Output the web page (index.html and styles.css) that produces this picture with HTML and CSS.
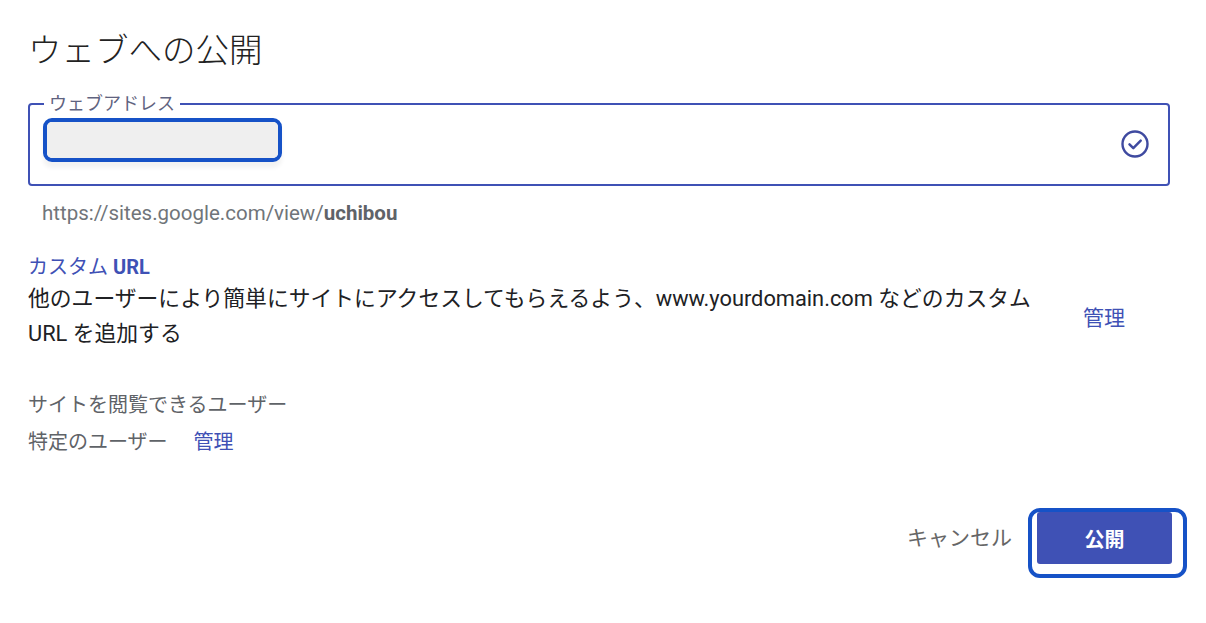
FILE: index.html
```html
<html>
    <head>
        <meta charset="utf-8">
        <link rel="stylesheet" href="styles.css">
    </head>
    <body>
        <div class="dialog">
            <h1 class="title">ウェブへの公開</h1>

            <fieldset class="addr">
                <legend class="addr-label">ウェブアドレス</legend>
                <div class="addr-row">
                    <div class="mark"><div class="blur"></div></div>
                    <svg class="ok" width="30" height="30" viewBox="0 0 30 30">
                        <circle cx="15" cy="15" r="12.5" fill="none" stroke="#3f4aa0" stroke-width="2.4"/>
                        <path d="M9.5 15.3l3.8 3.8 7.4-7.4" fill="none" stroke="#3f4aa0" stroke-width="2.5" stroke-linecap="round" stroke-linejoin="round"/>
                    </svg>
                </div>
            </fieldset>
            <div class="hint">https://sites.google.com/view/<b>uchibou</b></div>

            <div class="sect-title">カスタム <b>URL</b></div>
            <div class="custom">
                <p class="desc">他のユーザーにより簡単にサイトにアクセスしてもらえるよう、www.yourdomain.com などのカスタム URL を追加する</p>
                <a class="link manage">管理</a>
            </div>

            <div class="viewers">サイトを閲覧できるユーザー</div>
            <div class="viewers-val">特定のユーザー<a class="link">管理</a></div>

            <div class="actions">
                <span class="cancel">キャンセル</span>
                <div class="mark-btn"><button class="publish">公開</button></div>
            </div>
        </div>
    </body>
</html>
```

FILE: styles.css
```css
body {
    margin: 0;
    background: white;
    font-family: Roboto, "Noto Sans CJK JP", sans-serif;
    color: #202124;
}
.dialog {
    padding: 31px 36px 0 28px;
}
.title {
    margin: 0;
    font-size: 33.5px;
    line-height: 40px;
    font-weight: 300;
    color: #222;
}
.addr {
    margin: 22px 0 0 0;
    border: 2px solid #3f51b5;
    border-radius: 4px;
    padding: 3px 20px 22px 13px;
}
.addr-label {
    margin-left: 1px;
    padding: 0 5px;
    font-size: 18px;
    line-height: 22px;
    color: #5f6380;
}
.addr-row {
    display: flex;
    align-items: center;
    justify-content: space-between;
}
.mark {
    border: 4px solid #1652c7;
    border-radius: 9px;
    box-shadow: 0 6px 4px rgba(0, 0, 0, 0.05);
}
.blur {
    width: 231px;
    height: 36px;
    background: #efefef;
    border-radius: 5px;
}
.ok {
    margin-top: 8px;
    margin-right: -2px;
}
.hint {
    margin-top: 15px;
    padding-left: 14px;
    font-size: 20.5px;
    line-height: 24px;
    color: #70757a;
}
.hint b {
    color: #5f6368;
}
.sect-title {
    margin-top: 29px;
    font-size: 20px;
    line-height: 26px;
    color: #3f51b5;
}
.custom {
    display: flex;
    align-items: center;
    justify-content: space-between;
    margin-top: 1px;
}
.desc {
    margin: 0;
    max-width: 1030px;
    font-size: 21.8px;
    line-height: 35px;
    color: #202124;
}
.link {
    color: #3f51b5;
    font-size: 20px;
    margin-left: 26px;
}
.manage {
    font-size: 21px;
    margin-left: 12px;
    margin-right: 45px;
}
.viewers {
    margin-top: 40px;
    font-size: 20px;
    line-height: 28px;
    color: #5f6368;
}
.viewers-val {
    margin-top: 9px;
    font-size: 20px;
    line-height: 28px;
    color: #5f6368;
}
.actions {
    display: flex;
    justify-content: flex-end;
    align-items: flex-start;
    margin-top: 52px;
    margin-right: -17px;
}
.cancel {
    margin-top: 4px;
    font-size: 21px;
    line-height: 52px;
    color: #666;
    margin-right: 16px;
}
.mark-btn {
    border: 4px solid #1652c7;
    border-radius: 12px;
    padding: 0 11px 10px 5px;
}
.publish {
    display: block;
    width: 135px;
    height: 52px;
    border: none;
    border-radius: 3px;
    background: #3f51b5;
    color: white;
    font-family: Roboto, "Noto Sans CJK JP", sans-serif;
    font-size: 20px;
    font-weight: 700;
}
```
